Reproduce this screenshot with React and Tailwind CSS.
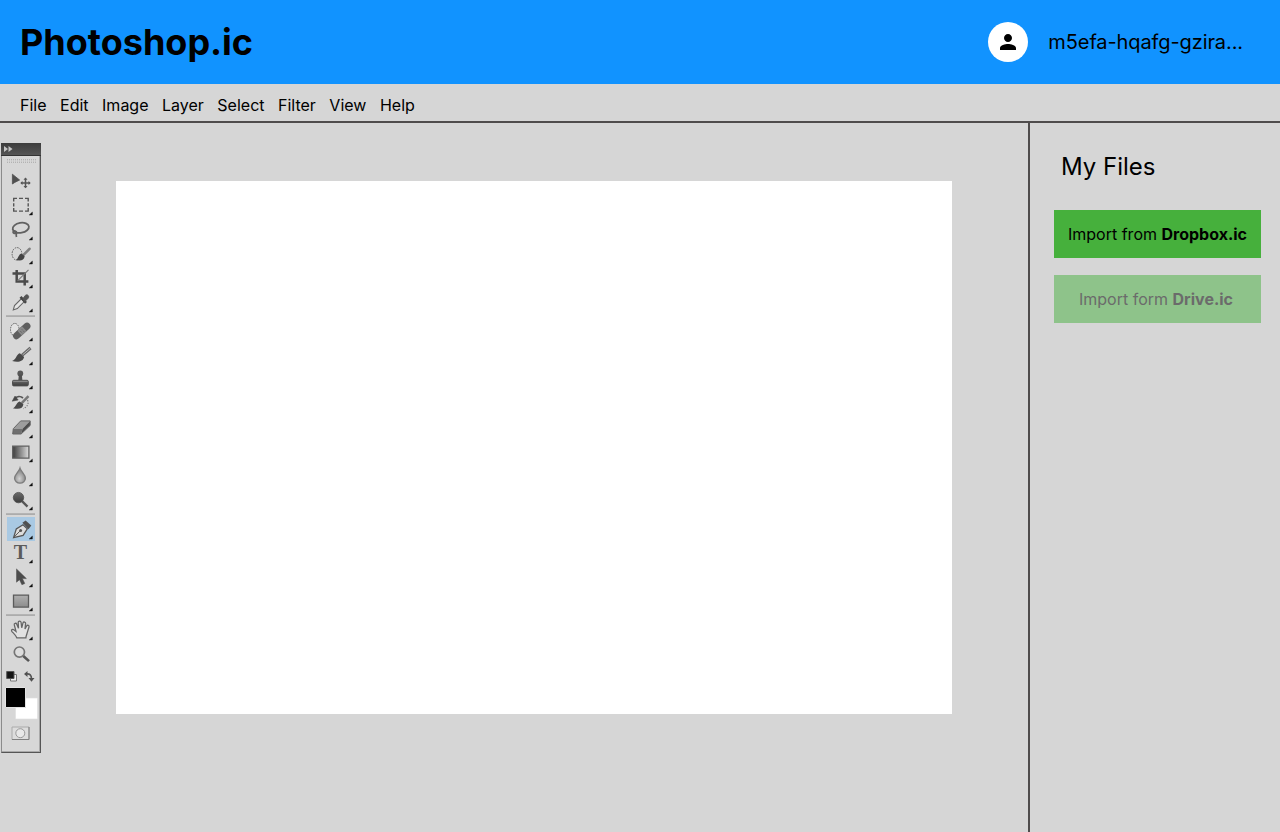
const menuItems = ["File", "Edit", "Image", "Layer", "Select", "Filter", "View", "Help"];

function Tool({ label, flyout = true, active = false, children }) {
  return (
    <button
      aria-label={label}
      className={active ? "block h-[24.25px] w-7 bg-[#a9c9e3]" : "block h-[24.25px] w-7"}
    >
      <svg viewBox="6 -0.4 28 24.25" className="block h-[24.25px] w-7" fill="none">
        {children}
        {flyout && <path d="M31.4 18.6v3h-3.200z" fill="#111" stroke="#111" strokeWidth=".4" />}
      </svg>
    </button>
  );
}

function Divider() {
  return <div className="my-px h-0.5 w-[29px] -translate-y-px border-t border-[#b4b4b4] bg-[#acacac]" />;
}

function Gradients() {
  return (
    <svg className="absolute h-0 w-0" aria-hidden="true">
      <defs>
        <linearGradient id="ramp" x1="0" x2="1">
          <stop stopColor="#3c3c3c" />
          <stop offset="1" stopColor="#dcdcdc" />
        </linearGradient>
        <linearGradient id="metal" x1="0" y1="0" x2="0" y2="1">
          <stop stopColor="#b0b0b0" />
          <stop offset="1" stopColor="#8c8c8c" />
        </linearGradient>
        <linearGradient id="dark" x1="0" y1="0" x2="0" y2="1">
          <stop stopColor="#6a6a6a" />
          <stop offset="1" stopColor="#3d3d3d" />
        </linearGradient>
        <radialGradient id="drop" cx=".45" cy=".7" r=".6">
          <stop stopColor="#d2d2d2" />
          <stop offset="1" stopColor="#828282" />
        </radialGradient>
      </defs>
    </svg>
  );
}

function Toolbox() {
  return (
    <aside className="ml-px mt-5 flex h-[610px] w-10 flex-col border-b border-l border-r border-b-[#555] border-l-[#8b8b8b] border-r-[#555] bg-[#d7d7d7] shadow-[inset_-1px_-1px_0_#a9a9a9]">
      <Gradients />
      <div className="-ml-px -mr-px flex h-[13px] shrink-0 items-center border-b border-[#333] bg-linear-to-b from-[#3c3c3c] to-[#555] pl-[3px]">
        <svg viewBox="0 0 9 6" className="h-1.5 w-[9px]" fill="#c4c4c4">
          <path d="M0 0l4 3-4 3zM4.5 0l4 3-4 3z" />
        </svg>
      </div>
      <svg viewBox="0 0 30 4" className="ml-[5px] mt-[3px] h-1 w-[30px] shrink-0" stroke="#b3b3b3" strokeDasharray="1 1">
        <path d="M0 .5h29M0 3.5h29" />
        <path d="M0 2h29" stroke="#bcbcbc" />
      </svg>
      <div className="ml-1 mt-[6px] flex w-[29px] shrink-0 flex-col items-end">
        <Tool label="Move" flyout={false}>
          <path d="M11.400 4.800v9.800l2.400-1.600 4.800-2.400z" fill="#505050" stroke="#505050" strokeWidth=".8" />
          <path d="M24.500 9v9M20 13.500h9" stroke="#555" strokeWidth="1.500" />
          <path d="M22.500 10.400l2-2.200 2 2.200zM22.500 16.600l2 2.200 2-2.200zM21.500 11.500l-2.200 2 2.200 2zM27.500 11.500l2.200 2-2.200 2z" fill="#555" />
        </Tool>
        <Tool label="Marquee">
          <path d="M12.700 8V5h3.300M18 5h4M24 5h3.200v3M27.200 9.800v3.200M27.200 14.700v3H24M22 17.700h-4M16 17.700h-3.300v-3M12.700 13V9.800" stroke="#555" strokeWidth="1.400" />
        </Tool>
        <Tool label="Lasso">
          <ellipse cx="19.800" cy="9.400" rx="8.200" ry="5" transform="rotate(-10 19.8 9.4)" stroke="#616161" strokeWidth="1.800" />
          <path d="M16 14c-1.700 2-4.400.8-3.800-.7.600-1.500 3.700-.8 3.300 1.200-.2 1.500-.6 2 0 4" stroke="#616161" strokeWidth="1.700" />
        </Tool>
        <Tool label="Quick selection">
          <ellipse cx="16" cy="11.500" rx="4.900" ry="6.300" stroke="#606060" strokeDasharray="1.600 1" />
          <path d="M28.500 6.400l-6.500 6.600" stroke="#808080" strokeWidth="2.600" strokeLinecap="round" />
          <path d="M20.300 11l3.400 2.900c-.8 4.200-4.300 4.800-8.700 3.500 2.500-1.200 2.300-5.400 5.300-6.400z" fill="#444" />
        </Tool>
        <Tool label="Crop">
          <path d="M15.700 3.500v11.700h11.700M11.500 7h12.200v12.200" stroke="#4b4b4b" strokeWidth="2.500" />
          <path d="M27.500 3.500L16.500 14.400" stroke="#777" strokeWidth="1.100" />
        </Tool>
        <Tool label="Eyedropper">
          <path d="M20.500 8.200l2.800 3-7 7-4 1.300 1.200-4.300z" fill="#e4e4e4" stroke="#666" strokeWidth="1.100" />
          <path d="M19.500 6.500l5.500 6" stroke="#444" strokeWidth="2.600" />
          <path d="M21.700 8.500l2.600-3.500c1.800-1.700 4.500.7 2.900 2.800l-3.300 3.300z" fill="#555" stroke="#555" strokeWidth=".9" />
        </Tool>
        <Divider />
        <Tool label="Healing brush">
          <ellipse cx="13.800" cy="10.200" rx="4.300" ry="6.200" fill="#e3e3e3" stroke="#606060" strokeDasharray="1.500 1" />
          <path d="M15.500 16.400L26 6.700" stroke="#5f5f5f" strokeWidth="6.900" strokeLinecap="round" />
          <path d="M18.500 13.700l4.700-4.400" stroke="#8a8a8a" strokeWidth="6.600" />
          <path d="M19.300 11.600l2.200 2.400M21 10.100l2.200 2.400" stroke="#5c5c5c" strokeWidth="1" strokeDasharray="1 1" />
        </Tool>
        <Tool label="Brush">
          <path d="M29.500 4.600L21 12" stroke="#686868" strokeWidth="3.100" />
          <path d="M29.200 4.900l-7.600 6.600" stroke="#c0c0c0" strokeWidth=".9" />
          <path d="M18.900 9.800l4.200 3.700c-.8 4.500-5.900 5.700-12 4 4.400-1.300 4-6.600 7.800-7.700z" fill="#484848" />
        </Tool>
        <Tool label="Clone stamp">
          <circle cx="19.300" cy="6" r="2.900" fill="#585858" />
          <path d="M17.900 7h2.900l.6 6h-4.100z" fill="#505050" />
          <rect x="11.500" y="12.900" width="15.800" height="5.600" rx="1.200" fill="url(#dark)" stroke="#505050" />
          <path d="M12.200 14h14.400" stroke="#8b8b8b" />
        </Tool>
        <Tool label="History brush">
          <path d="M27.500 4.700l-6.800 7" stroke="#777" strokeWidth="2.500" />
          <path d="M18.700 10l3.700 2.900c-.5 4.500-4.400 5.200-10.600 3.900 3.500-1.300 3.300-5.800 6.900-6.800z" fill="#494949" />
          <path d="M13.500 7.400c2.500-2.600 6-2.800 8.500-.8" stroke="#555" strokeWidth="1.800" />
          <path d="M14 4.600l3.200 4-6 1.200z" fill="#484848" stroke="#484848" strokeWidth=".5" />
          <path d="M26.500 8.700c1.500 3.500 0 6.800-4.300 8.500" stroke="#777" strokeWidth="1.200" strokeDasharray="1.300 1.300" />
        </Tool>
        <Tool label="Eraser">
          <path d="M19.700 4.500h9.500l-7.600 7.800h-9.300z" fill="#9d9d9d" />
          <path d="M12.300 12.300h9.300l-1.500 5.300h-8.400z" fill="#6f6f6f" />
          <path d="M21.600 12.300l7.600-7.800V9l-9.100 8.600z" fill="#4c4c4c" />
          <path d="M11.700 17.600l.6-5.300 7.400-7.800h9.500V9l-9.100 8.600z" stroke="#666" strokeWidth="1" strokeLinejoin="round" />
        </Tool>
        <Tool label="Gradient">
          <path d="M11.700 5.700h16.200v12H11.700z" fill="url(#ramp)" stroke="#606060" strokeWidth="1.300" />
        </Tool>
        <Tool label="Blur">
          <path d="M19 3.800c1 3.600 5.400 6.500 5.400 10a5.400 5 0 01-10.800 0C13.600 10.300 18 7.400 19 3.800z" fill="url(#drop)" stroke="#7c7c7c" strokeWidth="1.300" />
        </Tool>
        <Tool label="Dodge">
          <path d="M20.500 12.200l6 6" stroke="#555" strokeWidth="2.300" />
          <circle cx="17.500" cy="9.200" r="5.200" fill="url(#dark)" stroke="#515151" strokeWidth=".8" />
        </Tool>
        <Divider />
        <Tool label="Pen" active>
          <path d="M12.600 20.200l2.700-8.700 6.700-4.200 4.300 4.200-4.200 6.500z" fill="#ddd" stroke="#555" strokeWidth="1.300" />
          <path d="M12.600 20.200l6.200-6.400" stroke="#555" strokeWidth="1" />
          <circle cx="19.600" cy="13.100" r="1.500" fill="#555" />
          <path d="M21.400 5.400l3.200-2.200 5.700 5-2.800 3.600z" fill="#505050" />
        </Tool>
        <Tool label="Type">
          <text x="19.500" y="17.400" textAnchor="middle" fill="#5b5b5b" className="font-['Liberation_Serif',serif] text-[20px] font-bold">T</text>
        </Tool>
        <Tool label="Path selection">
          <path d="M15.500 3.500v13.300l3-2.500 2.400 5 2.900-1.200-2.400-4.900h4z" fill="#4c4c4c" stroke="#4c4c4c" strokeWidth=".5" />
        </Tool>
        <Tool label="Rectangle">
          <path d="M12.500 5.700h15v12h-15z" fill="url(#metal)" stroke="#5b5b5b" strokeWidth="1.300" />
        </Tool>
        <Divider />
        <Tool label="Hand">
          <path d="M15.800 19.400c-1-2.700-3.300-4.500-5-6.500-.9-1.400.8-2.500 2-1.500l2.200 1.600-1.700-6.500c-.4-1.800 1.900-2.300 2.500-.7l1.700 4-.3-5.600c0-1.800 2.600-1.900 2.900-.1l.6 5.300 1.300-4.900c.5-1.500 2.800-1 2.600.5l-.6 5.600 1.600-3c.9-1.500 2.900-.5 2.400 1l-1.900 6.100c-.4 1.900-1.200 2.800-1.200 4.700z" fill="#e1e1e1" stroke="#666" strokeWidth="1.300" />
        </Tool>
        <Tool label="Zoom" flyout={false}>
          <path d="M22 13.300l6 5.400" stroke="#555" strokeWidth="2.600" />
          <circle cx="18.400" cy="9.700" r="5.100" fill="#ddd" stroke="#757575" strokeWidth="1.700" />
        </Tool>
      </div>
      <div className="ml-1 mt-[4px] flex w-[29px] shrink-0 justify-between">
        <svg viewBox="0 0 12 12" className="h-3 w-3">
          <path d="M4.500 4.500h6v6.500h-6z" fill="#f0f0f0" stroke="#777" />
          <path d="M.7 1.500h7.300v7H.7z" fill="#151515" stroke="#555" />
        </svg>
        <svg viewBox="0 0 12 12" className="h-3 w-3" fill="none">
          <path d="M3 4c4-.5 5.500 1 5.500 5" stroke="#555" strokeWidth="1.700" />
          <path d="M4.500 1v6L1 4zM5.500 8h6l-3 3.700z" fill="#505050" />
        </svg>
      </div>
      <svg viewBox="0 0 34 34" className="ml-[3px] mt-[4px] h-[34px] w-[34px] shrink-0">
        <path d="M10.500 12h22v21h-22z" fill="#fff" stroke="#ddd" strokeWidth=".6" />
        <path d="M.5 1.500h20v20H.5z" fill="#000" stroke="#e3e3e3" />
      </svg>
      <svg viewBox="0 0 19 15" className="ml-[9px] mt-[6px] h-[15px] w-[19px] shrink-0">
        <path d="M1 1h17v12.500H1z" fill="#ddd" stroke="#aaa" />
        <path d="M1 13.500h17V1" fill="none" stroke="#808080" />
        <circle cx="9.300" cy="7.200" r="4.500" fill="#e8e8e8" stroke="#999" />
      </svg>
    </aside>
  );
}

export default function App() {
  return (
    <div className="flex h-[832px] w-[1280px] flex-col overflow-hidden bg-[#d6d6d6] font-['Inter',sans-serif] text-black">
      <header className="flex h-[84px] shrink-0 items-center justify-between bg-[#1193ff] pl-5 pr-[37px]">
        <h1 className="text-4xl font-bold">Photoshop.ic</h1>
        <div className="flex items-center gap-5">
          <div className="flex size-10 items-center justify-center rounded-full bg-white">
            <svg viewBox="0 0 24 24" className="size-6">
              <path d="M12 12c2.210 0 4-1.790 4-4s-1.790-4-4-4-4 1.790-4 4 1.790 4 4 4zm0 2c-2.670 0-8 1.340-8 4v2h16v-2c0-2.660-5.330-4-8-4z" />
            </svg>
          </div>
          <span className="text-xl tracking-[-0.1px]">m5efa-hqafg-gzira...</span>
        </div>
      </header>
      <nav className="flex h-[39px] shrink-0 items-center gap-[13.5px] border-b-2 border-[#4f4c4c] pl-5 pt-1 text-base">
        {menuItems.map((item) => (
          <span key={item}>{item}</span>
        ))}
      </nav>
      <div className="flex min-h-0 flex-1">
        <Toolbox />
        <main className="flex-1 pl-[75px] pt-[58px]">
          <div className="h-[533px] w-[836px] bg-white" />
        </main>
        <section className="w-[252px] border-l-2 border-[#4f4c4c] pl-6 pt-7">
          <h2 className="pl-[7px] text-2xl">My Files</h2>
          <div className="mt-[27px] flex w-[207px] flex-col gap-[17px]">
            <button className="h-12 bg-[#46b03c] text-base whitespace-nowrap">
              Import from <b className="font-bold">Dropbox.ic</b>
            </button>
            <button className="h-12 bg-[#8ec38a] pr-[3px] text-base whitespace-nowrap text-[#6b6b6b]" disabled>
              Import form <b className="font-bold">Drive.ic</b>
            </button>
          </div>
        </section>
      </div>
    </div>
  );
}
